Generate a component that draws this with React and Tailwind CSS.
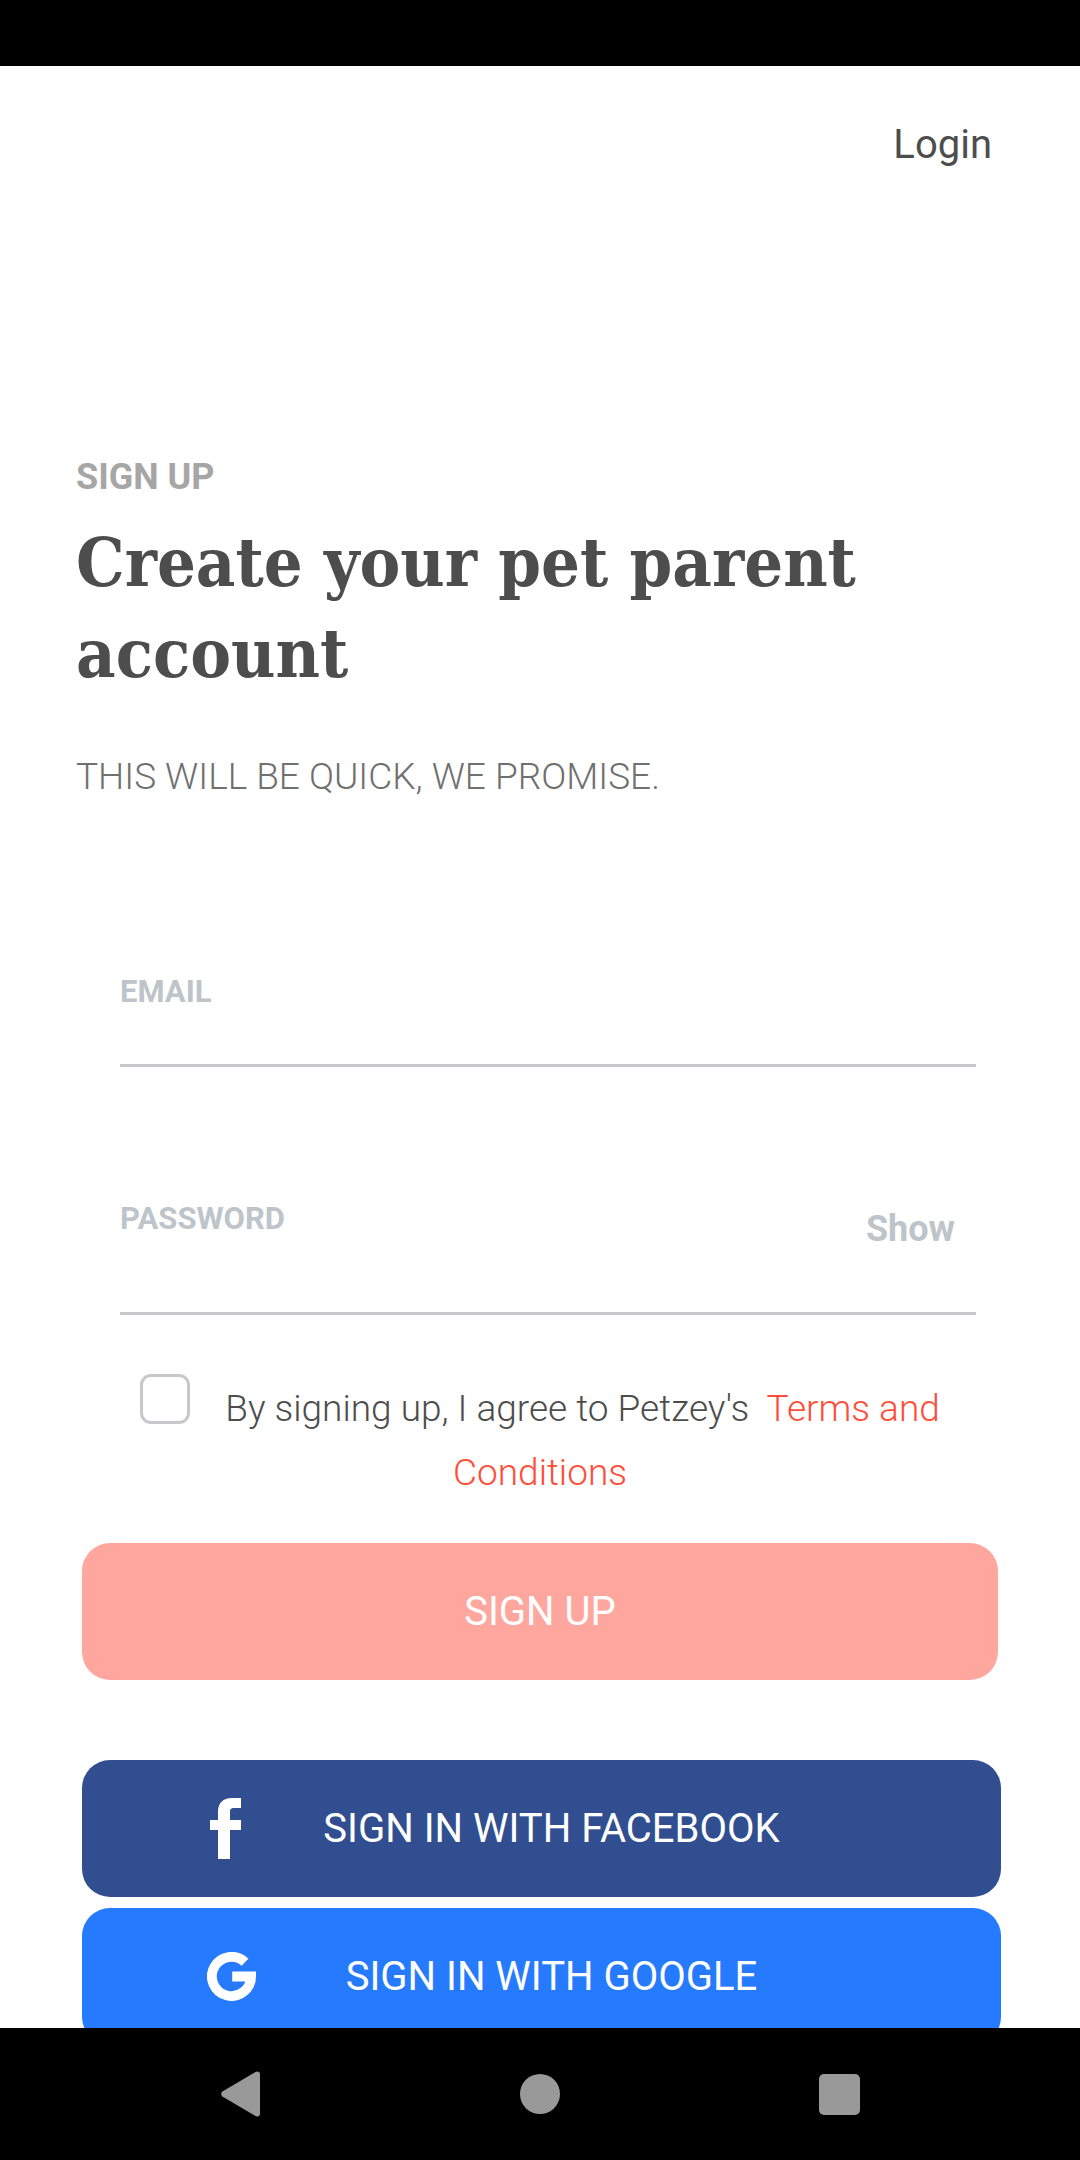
import { useState } from "react";

function StatusBar() {
  return <div className="h-[66px] shrink-0 bg-black" />;
}

function FacebookIcon() {
  return (
    <svg viewBox="-3 0 34 61" className="h-[61px] w-[34px]" fill="currentColor" aria-hidden="true">
      <path d="M8 61V32H0V22h8V14C8 5 13 0 22 0h9v10h-7c-3 0-4 1-4 4v8h11v10H20v29z" />
    </svg>
  );
}

function GoogleIcon() {
  return (
    <svg viewBox="0 0 49 49" className="size-[49px]" fill="none" stroke="currentColor" aria-hidden="true">
      <path d="M38 10.2A19.6 19.6 0 1 0 44.1 24.5H25.2" strokeWidth="9.8" />
    </svg>
  );
}

function SocialButton({ icon, label, color }) {
  return (
    <button type="button" className={`flex h-[137px] w-full items-center rounded-[28px] pr-[173px] text-[40px] text-white ${color}`}>
      <span className="flex w-[193px] shrink-0 pl-[125px]">{icon}</span>
      <span className="flex-1 text-center whitespace-nowrap">{label}</span>
    </button>
  );
}

function NavBar() {
  return (
    <nav className="flex h-[132px] shrink-0 items-center justify-around bg-black px-[91px] text-[#999999]">
      <button type="button" aria-label="Back" className="flex w-[50px] justify-center">
        <svg viewBox="0 0 40 46" className="h-[46px] w-[40px]" fill="currentColor">
          <path d="M34.5 1 1.4 20.6a3 3 0 0 0 0 4.8L34.5 45c2.2 1.2 4.5.4 4.5-2.2V3.2C39 .6 36.7-.2 34.5 1z" />
        </svg>
      </button>
      <button type="button" aria-label="Home" className="flex w-[50px] justify-center">
        <span className="size-[40px] rounded-full bg-current" />
      </button>
      <button type="button" aria-label="Recent apps" className="flex w-[50px] justify-center">
        <span className="size-[41px] rounded-[5px] bg-current" />
      </button>
    </nav>
  );
}

export default function App() {
  const [visible, setVisible] = useState(false);
  return (
    <div className="flex h-screen flex-col bg-white font-['Roboto',sans-serif] text-[#4d4d4d]">
      <StatusBar />
      <main className="min-h-0 flex-1 overflow-y-auto [scrollbar-width:none]">
        <header className="flex justify-end px-[88px] pt-[53px]">
          <a href="#login" className="text-[40px] leading-[52px]">Login</a>
        </header>

        <section className="px-[76px] pt-[284px]">
          <p className="text-[36px] leading-[44px] font-bold text-[#a6a6a6]">SIGN UP</p>
          <h1 className="pt-[18px] font-['DejaVu_Serif_Condensed','DejaVu_Serif',serif] text-[68px] leading-[91px] font-bold">
            Create your pet parent account
          </h1>
          <p className="pt-[56px] text-[37px] leading-[44px] font-light text-[#707070]">
            THIS WILL BE QUICK, WE PROMISE.
          </p>
        </section>

        <form className="pt-[173px]" onSubmit={(e) => e.preventDefault()}>
          <div className="mr-[104px] ml-[120px] border-b-3 border-[#c7c7cc]">
            <label htmlFor="email" className="block text-[31px] leading-[40px] font-bold text-[#bdc5ca]">EMAIL</label>
            <input id="email" type="email" className="block h-[52px] w-full text-[37px] outline-none" />
          </div>
          <div className="mt-[132px] mr-[104px] ml-[120px] flex border-b-3 border-[#c7c7cc] text-[#bdc5ca]">
            <div className="flex-1">
              <label htmlFor="password" className="block text-[31px] leading-[40px] font-bold">PASSWORD</label>
              <input id="password" type={visible ? "text" : "password"} className="block h-[73px] w-full text-[37px] text-[#4d4d4d] outline-none" />
            </div>
            <button type="button" onClick={() => setVisible(!visible)} className="mt-[8px] mr-[21px] h-[44px] text-[36px] leading-[44px] font-bold">
              Show
            </button>
          </div>

          <div className="px-[120px] pt-[59px] text-center text-[37px] leading-[64px] font-light">
            <input id="terms" type="checkbox" className="mr-[35px] inline-block size-[50px] appearance-none rounded-[11px] border-3 border-[#c7c7cc] align-[-3px] checked:bg-[#ff4d3a]" />
            <label htmlFor="terms">By signing up, I agree to Petzey's</label>&nbsp;{" "}
            <a href="#terms" className="text-[#ff4d3a]">
              <span>Terms and</span> <span>Conditions</span>
            </a>
          </div>

          <div className="px-[82px] pt-[38px]">
            <button type="submit" className="h-[137px] w-full rounded-[28px] bg-[#ffa69e] text-[40px] text-white">SIGN UP</button>
          </div>
        </form>

        <div className="flex flex-col gap-[11px] pt-[80px] pr-[79px] pb-[40px] pl-[82px]">
          <SocialButton icon={<FacebookIcon />} label="SIGN IN WITH FACEBOOK" color="bg-[#314e91]" />
          <SocialButton icon={<GoogleIcon />} label="SIGN IN WITH GOOGLE" color="bg-[#257afd]" />
        </div>
      </main>
      <NavBar />
    </div>
  );
}
